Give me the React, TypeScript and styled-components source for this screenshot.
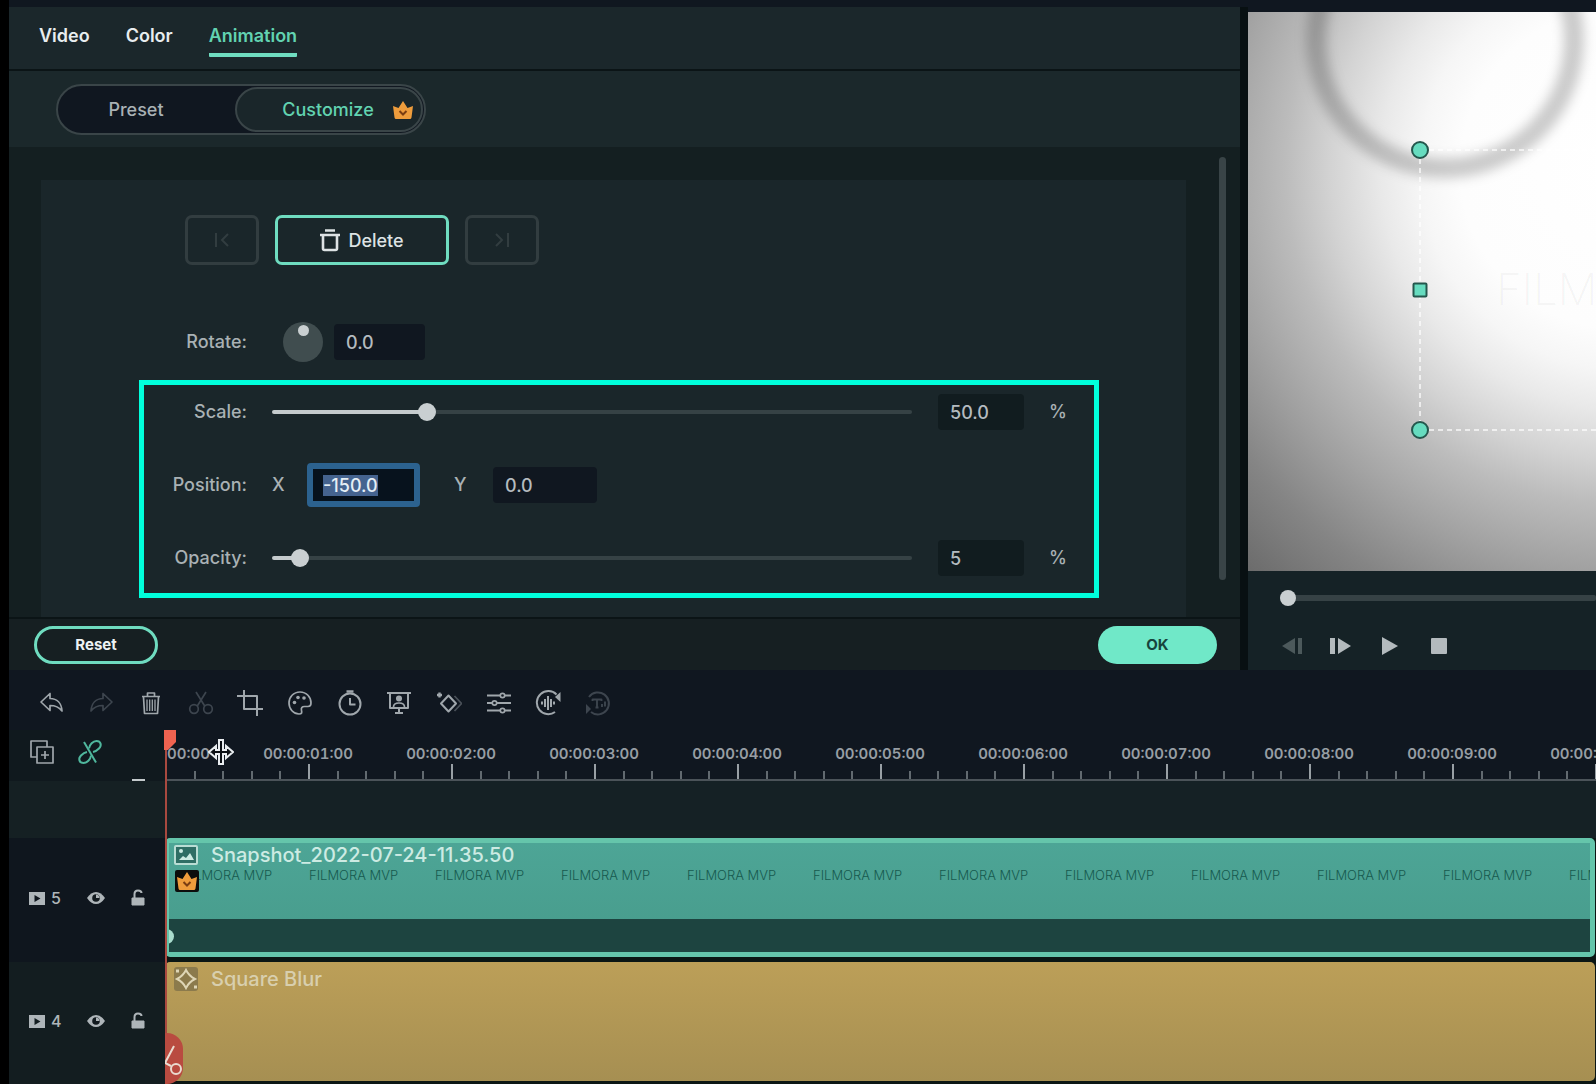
import React, { useEffect, useRef, useState } from "react";
import styled, { createGlobalStyle, css } from "styled-components";

const color = {
  ink: "#101720",
  panel: "#1a262a",
  panelDeep: "#141f21",
  line: "#0b1416",
  mint: "#6fdcc0",
  mintSoft: "#62d3b1",
  text: "#a9b1b4",
  textBright: "#e8edef",
  dim: "#3a4548",
  icon: "#a0a7ac",
  highlight: "#00ffdc",
};

const GlobalStyle = createGlobalStyle`
  *, *::before, *::after { box-sizing: border-box; }
  html, body { margin: 0; background: #000; }
  body {
    font-family: Inter, "Liberation Sans", sans-serif;
    color: ${color.text};
    overflow: hidden;
  }
  button, input { font: inherit; color: inherit; }
  button { padding: 0; border: 0; background: none; cursor: pointer; }
  svg { display: block; }
`;

const Page = styled.div`
  display: flex;
  flex-direction: column;
  min-height: 100vh;
  padding-left: 9px;
`;

const Editor = styled.main`
  display: grid;
  grid-template-columns: minmax(0, 1231fr) minmax(0, 356fr);
  background: ${color.ink};
`;

/* ---------- properties panel ---------- */

const Properties = styled.section`
  display: flex;
  flex-direction: column;
  margin-top: 7px;
  background: ${color.panel};
`;

const Tabs = styled.nav`
  display: flex;
  align-items: flex-start;
  gap: 36px;
  height: 64px;
  padding: 17px 31px 0 30px;
  border-bottom: 2px solid ${color.line};
  background: #1b272b;
`;

const Tab = styled.button<{ $active?: boolean }>`
  padding-bottom: 5px;
  border-bottom: 4px solid ${(p) => (p.$active ? color.mint : "transparent")};
  border-radius: 1px;
  font-size: 18px;
  line-height: 24px;
  font-weight: 600;
  color: ${(p) => (p.$active ? color.mintSoft : color.textBright)};
`;

const ModeBar = styled.div`
  padding: 13px 47px 12px;
  background: #1b282b;
`;

const Segmented = styled.div`
  display: grid;
  grid-template-columns: 176px 188px;
  width: max-content;
  height: 51px;
  padding: 1px;
  border: 2px solid ${color.dim};
  border-radius: 26px;
  background: ${color.ink};
`;

const Segment = styled.button<{ $active?: boolean }>`
  display: flex;
  align-items: center;
  justify-content: center;
  gap: 18px;
  border-radius: 23px;
  font-size: 18px;
  font-weight: 500;
  color: ${color.text};
  padding-right: 22px;
  ${(p) =>
    p.$active &&
    css`
      border: 2px solid ${color.dim};
      background: ${color.panel};
      color: ${color.mintSoft};
      padding: 0 6px 0 44px;
    `}
`;

const ScrollArea = styled.div`
  display: flex;
  align-items: flex-start;
  gap: 33px;
  padding: 0 14px 0 32px;
  background: ${color.panelDeep};
`;

const ScrollThumb = styled.div`
  flex: none;
  align-self: stretch;
  width: 7px;
  margin: 10px 0 37px;
  border-radius: 4px;
  background: #394447;
`;

const Card = styled.div`
  flex: 1;
  min-width: 0;
  margin-top: 33px;
  padding: 35px 87px 19px 98px;
  background: ${color.panel};
`;

const KeyframeButtons = styled.div`
  display: flex;
  gap: 16px;
  padding-left: 46px;
`;

const KeyButton = styled.button<{ $primary?: boolean }>`
  display: flex;
  align-items: center;
  justify-content: center;
  gap: 8px;
  width: ${(p) => (p.$primary ? 174 : 74)}px;
  height: 50px;
  border: 3px solid ${(p) => (p.$primary ? color.mint : "#323d40")};
  border-radius: 7px;
  font-size: 18px;
  font-weight: 500;
  color: ${(p) => (p.$primary ? "#dde2e4" : "#323d40")};
`;

const Row = styled.div`
  display: flex;
  align-items: center;
  height: 46px;
`;

const RotateRow = styled(Row)`
  margin: 54px 0 15px;
  padding-left: 5px;
`;

const Label = styled.label`
  flex: none;
  width: 103px;
  text-align: right;
  font-size: 18px;
  line-height: 24px;
  font-weight: 500;
  white-space: nowrap;
`;

const Dial = styled.div`
  display: flex;
  justify-content: center;
  width: 40px;
  height: 40px;
  margin: 0 11px 0 36px;
  padding-top: 3px;
  border-radius: 50%;
  background: #404d4f;

  &::after {
    content: "";
    width: 11px;
    height: 11px;
    border-radius: 50%;
    background: #c9cfd1;
  }
`;

const Field = styled.input<{ $width: number; $tone?: string }>`
  flex: none;
  width: ${(p) => p.$width}px;
  height: 36px;
  padding: 0 12px;
  border: 0;
  border-radius: 4px;
  outline: 0;
  background: ${(p) => p.$tone || color.ink};
  font-size: 18px;
  line-height: 24px;
  font-weight: 500;
  color: #b4bbbf;
`;

const FocusField = styled(Field)`
  height: 44px;
  padding: 0 10px;
  border: 6px solid #2c628f;
  background: #07121d;
  color: #e6eef5;

  &::selection {
    background: #45638f;
    color: #e6eef5;
  }
`;

const Highlight = styled.section`
  display: flex;
  flex-direction: column;
  gap: 27px;
  padding: 4px 27px 12px 0;
  border: 5px solid ${color.highlight};
`;

const Range = styled.input<{ $thumb: number; $track: number }>`
  appearance: none;
  flex: 1;
  min-width: 0;
  height: 20px;
  margin: 0;
  background: none;
  cursor: pointer;

  &::-webkit-slider-runnable-track {
    height: ${(p) => p.$track}px;
    border-radius: 2px;
    background: linear-gradient(
      to right,
      #c5cbcd var(--fill),
      #364245 var(--fill)
    );
  }

  &::-webkit-slider-thumb {
    appearance: none;
    width: ${(p) => p.$thumb}px;
    height: ${(p) => p.$thumb}px;
    margin-top: ${(p) => (p.$track - p.$thumb) / 2}px;
    border-radius: 50%;
    background: #c9cfd1;
  }
`;

const SliderSlot = styled.div`
  display: flex;
  flex: 1;
  min-width: 0;
  margin: 0 26px 0 25px;
`;

const Unit = styled.span`
  margin-left: 25px;
  font-size: 18px;
  line-height: 24px;
  font-weight: 500;
`;

const AxisLabel = styled.label`
  width: 35px;
  margin-left: 25px;
  font-size: 18px;
  line-height: 24px;
  font-weight: 500;

  & + input + & {
    width: 39px;
    margin-left: 34px;
  }
`;

const Footer = styled.footer`
  display: flex;
  align-items: center;
  justify-content: space-between;
  height: 53px;
  padding: 0 23px 0 25px;
  border-top: 2px solid ${color.line};
  background: #161f22;
`;

const Pill = styled.button<{ $filled?: boolean }>`
  width: ${(p) => (p.$filled ? 119 : 124)}px;
  height: 38px;
  border: ${(p) => (p.$filled ? "0" : `3px solid ${color.mint}`)};
  border-radius: 19px;
  background: ${(p) => (p.$filled ? "#70e8c8" : "transparent")};
  color: ${(p) => (p.$filled ? "#17443c" : "#eef2f3")};
  font-size: 15px;
  font-weight: 700;
`;

/* ---------- preview ---------- */

const Preview = styled.section`
  display: flex;
  flex-direction: column;
  margin-top: 7px;
  padding-top: 5px;
  border-left: 8px solid #081012;
  background: ${color.ink};
`;

const Screen = styled.div`
  position: relative;
  flex: 1;
  overflow: hidden;
  background: radial-gradient(
    circle at 107% 28%,
    #fff 0,
    #fdfdfd 160px,
    #f6f6f6 200px,
    #e9e9e9 240px,
    #d3d3d3 290px,
    #bcbcbc 335px,
    #a2a2a2 400px,
    #858585 470px,
    #6c6c6c 547px
  );
`;

const ScreenArt = styled.svg`
  position: absolute;
  top: 0;
  left: 0;
`;

const Transport = styled.div`
  display: flex;
  flex-direction: column;
  gap: 26px;
  height: 99px;
  padding: 17px 0 0 32px;
  background: #152226;
`;

const Scrub = styled.div`
  display: flex;
`;

const TransportButtons = styled.div`
  display: flex;
  gap: 25px;
  color: #b3babd;
`;

const TransportButton = styled.button`
  width: 24px;
  height: 24px;

  &:disabled {
    color: #4c595b;
  }
`;

/* ---------- timeline ---------- */

const Timeline = styled.section`
  flex: 1;
  background: ${color.ink};
`;

const Toolbar = styled.div`
  display: grid;
  grid-template-columns: repeat(12, 1fr);
  width: 596px;
  height: 60px;
  margin-left: 18px;
  padding-top: 5px;
  align-items: center;
  justify-items: center;
`;

const Tool = styled.button<{ $off?: boolean }>`
  color: ${(p) => (p.$off ? "#3d454e" : color.icon)};
`;

const Tracks = styled.div`
  position: relative;
`;

const TimelineRow = styled.div`
  display: grid;
  grid-template-columns: 156px minmax(0, 1fr);
`;

const RulerTools = styled.div`
  display: flex;
  align-items: center;
  gap: 22px;
  padding: 0 0 8px 20px;
  color: ${color.icon};
  background: #10191e;
`;

const Ruler = styled.div`
  display: flex;
  height: 51px;
  overflow: hidden;
  border-bottom: 2px solid #4b5359;
`;

const Second = styled.div`
  display: flex;
  flex: none;
  flex-direction: column;
  justify-content: flex-end;
  width: 143px;
`;

const Timecode = styled.time`
  align-self: flex-start;
  width: 0;
  display: flex;
  justify-content: center;
  font-size: 15px;
  line-height: 20px;
  font-weight: 600;
  font-variant-numeric: tabular-nums;
  color: #979ea4;
  white-space: nowrap;
`;

const Ticks = styled.div`
  display: grid;
  grid-template-columns: repeat(5, 1fr);
  align-items: end;
  height: 15px;
`;

const Tick = styled.i`
  width: 2px;
  height: 8px;
  background: #626a70;

  &:first-child {
    height: 15px;
    background: #99a0a5;
  }
`;

const EmptyHead = styled.div`
  display: flex;
  justify-content: flex-end;
  height: 57px;
  padding-right: 20px;
  background: #152023;
`;

const Dash = styled.i`
  width: 13px;
  height: 2px;
  margin-top: -2px;
  background: #c4cacc;
  z-index: 1;
`;

const EmptyLane = styled.div`
  background: #152125;
`;

const TrackHead = styled.div<{ $active?: boolean }>`
  display: flex;
  align-items: center;
  padding: 0 0 4px 20px;
  color: #aeb5b9;
  background: ${(p) => (p.$active ? "#0f161e" : "#131d20")};
`;

const TrackNumber = styled.span`
  width: 42px;
  padding-left: 6px;
  font-size: 16px;
  line-height: 20px;
  font-weight: 500;
`;

const HeadButton = styled.button`
  width: 18px;
  height: 20px;
  margin-right: 25px;

  &:last-child {
    margin: 0;
  }
`;

const Lane = styled.div<{ $last?: boolean }>`
  padding: 0 1px ${(p) => (p.$last ? 3 : 5)}px 0;
  background: #0b1614;
`;

const Clip = styled.article<{ $kind: "media" | "effect" }>`
  position: relative;
  overflow: hidden;
  max-width: 1430px;
  height: 119px;
  border-radius: 5px;
  ${(p) =>
    p.$kind === "media"
      ? css`
          border: 5px solid #65c5ab;
          border-left-width: 4px;
          background: linear-gradient(#4da596, #479b8b);
        `
      : css`
          padding: 5px 4px;
          background: linear-gradient(#bc9f58, #a68f52);
        `}
`;

const ClipTitle = styled.h2<{ $muted?: boolean }>`
  display: flex;
  align-items: center;
  gap: 13px;
  margin: 0;
  padding-left: 5px;
  font-size: 20px;
  line-height: 24px;
  font-weight: 500;
  color: ${(p) => (p.$muted ? "#d8cfae" : "#cdebe3")};
  white-space: nowrap;
`;

const Thumbnails = styled.div`
  display: flex;
  height: 52px;
  padding-left: 14px;
`;

const Thumbnail = styled.span`
  flex: none;
  width: 126px;
  font-size: 13px;
  line-height: 16px;
  font-weight: 300;
  color: #175a4f;
  white-space: nowrap;
`;

const CrownBadge = styled.div`
  position: absolute;
  top: 27px;
  left: 6px;
  padding: 0 1px;
  border-radius: 2px;
  background: #0c0d0c;
`;

const KeyframeLane = styled.div`
  height: 33px;
  background: #1d4440;
`;

const KeyframeDot = styled.i`
  position: absolute;
  bottom: 8px;
  left: -10px;
  width: 15px;
  height: 15px;
  border-radius: 50%;
  background: #a9dccd;
`;

const Playhead = styled.div`
  position: absolute;
  top: 0;
  bottom: 0;
  left: 156px;
  width: 2px;
  background: #a8493f;
`;

const PlayheadGrip = styled.svg`
  position: absolute;
  top: 0;
  left: -1px;
`;

const SplitTag = styled.div`
  position: absolute;
  bottom: 0;
  left: 0;
  width: 18px;
  height: 51px;
  overflow: hidden;
  border-radius: 0 16px 16px 0;
  background: #b94b40;
`;

const Pointer = styled.svg`
  position: absolute;
  top: 8px;
  left: 199px;
`;

/* ---------- drawings ---------- */

const Crown = ({ size }: { size: number }) => (
  <svg width={size} height={size} viewBox="0 0 22 22">
    <path
      d="M1 7 6.500 9 11 2l4.500 7L21 7l-1.500 11.500q-.3 1.500-1.500 1.500H4q-1.200 0-1.500-1.500z"
      fill="#ee9c3c"
    />
    <path d="m7.500 12 3.500 3.500 3.500-3.500" fill="none" stroke="#7a3d12" strokeWidth="2" />
  </svg>
);

type StrokeIconProps = { size?: number; children: React.ReactNode };

const StrokeIcon = ({ size = 26, children }: StrokeIconProps) => (
  <svg
    width={size}
    height={size}
    viewBox="0 0 26 26"
    fill="none"
    stroke="currentColor"
    strokeWidth="1.700"
    strokeLinejoin="round"
  >
    {children}
  </svg>
);

const tools = [
  {
    name: "Undo",
    art: <path d="M2 12 11 3.500v5c7 0 11.500 4.500 12 12.500-3-4-6.500-5.500-12-5.500v5z" />,
  },
  {
    name: "Redo",
    off: true,
    art: <path d="M24 12 15 3.500v5C8 8.500 3.500 13 3 21c3-4 6.500-5.500 12-5.500v5z" />,
  },
  {
    name: "Delete clip",
    art: (
      <>
        <path d="M4 6.500h18M9.500 6V3h7v3M5.500 7l1 16.500h13l1-16.500" />
        <path d="M9 9.500v11.500M11.700 9.500v11.500M14.300 9.500v11.500M17 9.500v11.500" strokeWidth="1.300" />
      </>
    ),
  },
  {
    name: "Split",
    off: true,
    art: (
      <>
        <path d="m8 2 9 14.500M18 2 9 16.500" />
        <circle cx="6" cy="19" r="4.300" />
        <circle cx="20" cy="19" r="4.300" />
      </>
    ),
  },
  {
    name: "Crop",
    art: <path d="M7 0v19h19M0 6h20v20" strokeWidth="2" />,
  },
  {
    name: "Color",
    art: (
      <>
        <path d="M13 2C6.500 2 2 7 2 13s4.500 11 10 11c3 0 3-1.500 2.500-3.500-.6-2.500.5-4 3-4H21c2 0 3-1.500 3-3.500C24 7 19.500 2 13 2z" />
        <g fill="currentColor" stroke="none">
          <circle cx="7.500" cy="12.500" r="1.800" />
          <circle cx="11" cy="7.500" r="1.800" />
          <circle cx="17" cy="8" r="1.800" />
        </g>
      </>
    ),
  },
  {
    name: "Speed",
    art: (
      <>
        <circle cx="13" cy="14" r="10.500" strokeWidth="2" />
        <path d="M9.500 1.500h7" strokeWidth="2.500" />
        <path d="M13 8v6.500h5.500" strokeWidth="2" />
      </>
    ),
  },
  {
    name: "Green screen",
    art: (
      <>
        <path d="M1 3h24M4 3v15h18V3M13 18v4M9 23h8" strokeWidth="2" />
        <circle cx="13" cy="8.500" r="2.200" fill="currentColor" />
        <path d="M7.500 17c0-3 2.500-4 5.500-4s5.500 1 5.500 4" />
      </>
    ),
  },
  {
    name: "Keyframe",
    art: (
      <>
        <path d="m12.500 5.500 7.500 8-7.500 8-7.500-8z" strokeWidth="2" />
        <path d="m18.500 6 7 7.500-7 7.500" opacity=".4" />
        <path d="M3.500 2.500v5M1 5h5" strokeWidth="2.400" />
      </>
    ),
  },
  {
    name: "Adjust",
    art: (
      <>
        <path d="M1 5.500h13M19 5.500h6M1 13h5M11 13h14M1 20.500h13M19 20.500h6" strokeWidth="2" />
        <circle cx="16.500" cy="5.500" r="2.200" />
        <circle cx="8.500" cy="13" r="2.200" />
        <circle cx="16.500" cy="20.500" r="2.200" />
      </>
    ),
  },
  {
    name: "Audio",
    art: (
      <>
        <path d="M21.500 4.500A11.500 11.500 0 1 0 20 22" strokeWidth="2" />
        <path d="M25.500 2v10l-5.500-5z" fill="currentColor" stroke="none" />
        <path d="M7 11.500v3M10 9v8M13 6v14M16 9v8M19 11.500v3" strokeWidth="2" />
      </>
    ),
  },
  {
    name: "Text to speech",
    off: true,
    art: (
      <>
        <path d="M4 7a11 11 0 1 1 2 15" strokeWidth="2" />
        <path d="M1 14v10l5-5z" fill="currentColor" stroke="none" />
        <path d="M7.500 11V9.500h9V11M12 9.500v8M10.500 17.500h3M17 14v3M20 11.500v5" strokeWidth="1.900" />
      </>
    ),
  },
];

const Film = () => (
  <svg width="16" height="13" viewBox="0 0 16 13">
    <path d="M0 0h16v13H0zM5.500 3v7l6-3.500z" fill="currentColor" fillRule="evenodd" />
  </svg>
);

const Eye = () => (
  <svg width="18" height="20" viewBox="0 0 18 20">
    <path d="M0 10q4-6 9-6t9 6q-4 6-9 6t-9-6z" fill="currentColor" />
    <circle cx="9" cy="10" r="3.800" fill="#121a1f" />
    <path d="M9 10V6.500a3.500 3.500 0 0 1 3.500 3.500z" fill="currentColor" />
  </svg>
);

const Unlocked = () => (
  <svg width="16" height="20" viewBox="0 0 16 20">
    <path d="M2 10h12v7H2z" fill="currentColor" stroke="currentColor" />
    <path d="M4.500 10V6Q4.500 2.500 8 2.500T11.500 5" fill="none" stroke="currentColor" strokeWidth="2" />
  </svg>
);

const Trash = () => (
  <svg width="20" height="24" viewBox="0 0 20 24" fill="none" stroke="currentColor" strokeWidth="2.600">
    <path d="M5 2.500h10M0 7h20M3 7v13.500q0 1.500 1.500 1.500h11q1.500 0 1.500-1.500V7" />
  </svg>
);

const Step = ({ flip }: { flip?: boolean }) => (
  <svg width="16" height="16" viewBox="0 0 16 16" fill="none" stroke="currentColor" strokeWidth="2">
    {flip ? <path d="m2 2 6 6-6 6M14 1v14" /> : <path d="m14 2-6 6 6 6M2 1v14" />}
  </svg>
);

/* ---------- pieces ---------- */

type SliderProps = { label: string; max: number; initial: number; digits: number };

const SliderRow = ({ label, max, initial, digits }: SliderProps) => {
  const [value, setValue] = useState(initial);
  const id = label.toLowerCase();
  return (
    <Row>
      <Label htmlFor={id}>{label}:</Label>
      <SliderSlot>
        <Range
          id={id}
          type="range"
          min={0}
          max={max}
          value={value}
          $thumb={18}
          $track={4}
          style={{ "--fill": `${(value / max) * 100}%` } as React.CSSProperties}
          onChange={(e) => setValue(Number(e.target.value))}
        />
      </SliderSlot>
      <Field
        aria-label={`${label} value`}
        $width={86}
        $tone="#111c1f"
        value={value.toFixed(digits)}
        onChange={(e) => setValue(Number(e.target.value) || 0)}
      />
      <Unit>%</Unit>
    </Row>
  );
};

const PropertiesPanel = () => {
  const [tab, setTab] = useState("Animation");
  const xField = useRef<HTMLInputElement>(null);

  useEffect(() => {
    xField.current?.focus({ preventScroll: true });
    xField.current?.select();
  }, []);

  return (
    <Properties>
      <Tabs>
        {["Video", "Color", "Animation"].map((name) => (
          <Tab key={name} $active={name === tab} onClick={() => setTab(name)}>
            {name}
          </Tab>
        ))}
      </Tabs>
      <ModeBar>
        <Segmented>
          <Segment>Preset</Segment>
          <Segment $active>
            Customize
            <Crown size={22} />
          </Segment>
        </Segmented>
      </ModeBar>
      <ScrollArea>
        <Card>
          <KeyframeButtons>
            <KeyButton aria-label="Previous keyframe">
              <Step />
            </KeyButton>
            <KeyButton $primary>
              <Trash />
              Delete
            </KeyButton>
            <KeyButton aria-label="Next keyframe">
              <Step flip />
            </KeyButton>
          </KeyframeButtons>
          <RotateRow>
            <Label htmlFor="rotate">Rotate:</Label>
            <Dial />
            <Field id="rotate" $width={91} defaultValue="0.0" />
          </RotateRow>
          <Highlight>
            <SliderRow label="Scale" max={213} initial={50} digits={1} />
            <Row>
              <Label as="span">Position:</Label>
              <AxisLabel htmlFor="pos-x">X</AxisLabel>
              <FocusField ref={xField} id="pos-x" $width={113} defaultValue="-150.0" />
              <AxisLabel htmlFor="pos-y">Y</AxisLabel>
              <Field id="pos-y" $width={104} defaultValue="0.0" />
            </Row>
            <SliderRow label="Opacity" max={161} initial={5} digits={0} />
          </Highlight>
        </Card>
        <ScrollThumb />
      </ScrollArea>
      <Footer>
        <Pill>Reset</Pill>
        <Pill $filled>OK</Pill>
      </Footer>
    </Properties>
  );
};

const PreviewPanel = () => (
  <Preview>
    <Screen>
      <ScreenArt width="700" height="560" viewBox="0 0 700 560">
        <defs>
          <filter id="soft" x="-20%" y="-20%" width="140%" height="140%">
            <feGaussianBlur stdDeviation="6" />
          </filter>
        </defs>
        <circle
          cx="197"
          cy="27"
          r="129"
          fill="none"
          stroke="#000"
          strokeOpacity=".2"
          strokeWidth="20"
          filter="url(#soft)"
        />
        <text x="248" y="293" fontSize="44" fontWeight="200" fill="#000" fillOpacity=".05">
          FILMORA
        </text>
        <path
          d="M172 147v270M181 418h520M181 138h520"
          fill="none"
          stroke="#fff"
          strokeOpacity=".65"
          strokeWidth="2"
          strokeDasharray="5 4"
        />
        <g fill="#66dcbf" stroke="#24574d" strokeWidth="2">
          <circle cx="172" cy="138" r="8" />
          <rect x="165.500" y="271.500" width="13" height="13" rx="1" />
          <circle cx="172" cy="418" r="8" />
        </g>
      </ScreenArt>
    </Screen>
    <Transport>
      <Scrub>
        <Range
          aria-label="Playback position"
          type="range"
          min={0}
          max={100}
          defaultValue={0}
          $thumb={16}
          $track={6}
          style={{ "--fill": "0%" } as React.CSSProperties}
        />
      </Scrub>
      <TransportButtons>
        <TransportButton aria-label="Previous frame" disabled>
          <svg width="24" height="24" viewBox="0 0 24 24" fill="currentColor">
            <path d="M2 12 15 4v16zM18 4h4v16h-4z" />
          </svg>
        </TransportButton>
        <TransportButton aria-label="Next frame">
          <svg width="24" height="24" viewBox="0 0 24 24" fill="currentColor">
            <path d="M22 12 9 4v16zM1 4h5v16H1z" />
          </svg>
        </TransportButton>
        <TransportButton aria-label="Play">
          <svg width="24" height="24" viewBox="0 0 24 24" fill="currentColor">
            <path d="M20 12 4 3v18z" />
          </svg>
        </TransportButton>
        <TransportButton aria-label="Stop">
          <svg width="24" height="24" viewBox="0 0 24 24" fill="currentColor">
            <rect x="4" y="4" width="16" height="16" rx="1" />
          </svg>
        </TransportButton>
      </TransportButtons>
    </Transport>
  </Preview>
);

const TrackControls = ({ number, active }: { number: number; active?: boolean }) => (
  <TrackHead $active={active}>
    <Film />
    <TrackNumber>{number}</TrackNumber>
    <HeadButton aria-label={`Show track ${number}`}>
      <Eye />
    </HeadButton>
    <HeadButton aria-label={`Lock track ${number}`}>
      <Unlocked />
    </HeadButton>
  </TrackHead>
);

const seconds = Array.from({ length: 11 }, (_, i) => `00:00:${String(i).padStart(2, "0")}:00`);

const TimelinePanel = () => (
  <Timeline>
    <Toolbar>
      {tools.map((tool) => (
        <Tool key={tool.name} aria-label={tool.name} $off={tool.off}>
          <StrokeIcon>{tool.art}</StrokeIcon>
        </Tool>
      ))}
    </Toolbar>
    <Tracks>
      <TimelineRow>
        <RulerTools>
          <Tool aria-label="Add track">
            <StrokeIcon>
              <path d="M8 18H2V2h16v6M8 8h16v16H8z" />
              <path d="M16 12v8M12 16h8" />
            </StrokeIcon>
          </Tool>
          <Tool aria-label="Unlink clips">
            <StrokeIcon>
              <g stroke="#4fb79d" strokeWidth="2">
                <path d="M12 9.500C12.500 5.500 16 2 19.500 2c4.500 0 5.500 4.500 2.500 7.500-1.500 1.500-3.500 3-6 3.500" />
                <path d="M14 16.500c-.5 4-4 7.500-7.500 7.500C2 24 1 19.500 4 16.500c1.500-1.500 3.500-3 6-3.500" />
                <path d="m7 3 12 20.500" />
              </g>
            </StrokeIcon>
          </Tool>
        </RulerTools>
        <Ruler>
          {seconds.map((code) => (
            <Second key={code}>
              <Timecode>{code}</Timecode>
              <Ticks>
                <Tick />
                <Tick />
                <Tick />
                <Tick />
                <Tick />
              </Ticks>
            </Second>
          ))}
        </Ruler>
      </TimelineRow>
      <TimelineRow>
        <EmptyHead>
          <Dash />
        </EmptyHead>
        <EmptyLane />
      </TimelineRow>
      <TimelineRow>
        <TrackControls number={5} active />
        <Lane>
          <Clip $kind="media">
            <ClipTitle>
              <svg width="24" height="20" viewBox="0 0 24 20">
                <rect x="1" y="1" width="22" height="18" rx="1" fill="#2f6e65" stroke="#b9ddd4" strokeWidth="2" />
                <path d="m5 15 4-4 3 2 4-5 4 7z" fill="#cdebe3" />
                <circle cx="7" cy="6" r="2" fill="#cdebe3" />
              </svg>
              Snapshot_2022-07-24-11.35.50
            </ClipTitle>
            <Thumbnails>
              {seconds.concat("end").map((key) => (
                <Thumbnail key={key}>FILMORA MVP</Thumbnail>
              ))}
            </Thumbnails>
            <CrownBadge>
              <Crown size={22} />
            </CrownBadge>
            <KeyframeLane />
            <KeyframeDot />
          </Clip>
        </Lane>
      </TimelineRow>
      <TimelineRow>
        <TrackControls number={4} />
        <Lane $last>
          <Clip $kind="effect">
            <ClipTitle $muted>
              <svg width="24" height="24" viewBox="0 0 24 24">
                <rect width="24" height="24" rx="3" fill="#8b7a4c" />
                <path
                  d="M12 3q3 6 9 9-6 3-9 9-3-6-9-9 6-3 9-9z"
                  fill="none"
                  stroke="#ded5b5"
                  strokeWidth="2"
                />
                <path d="M2 4h3M20 20h3" stroke="#ded5b5" strokeWidth="3" />
              </svg>
              Square Blur
            </ClipTitle>
          </Clip>
        </Lane>
      </TimelineRow>
      <Playhead>
        <PlayheadGrip width="12" height="20" viewBox="0 0 12 20">
          <path d="M0 0h12v12l-8 8H0z" fill="#ef6350" />
        </PlayheadGrip>
        <SplitTag>
          <svg width="18" height="51" viewBox="0 0 18 51" fill="none" stroke="#eadbd0" strokeWidth="2">
            <path d="m9 13-9 17 6 3" />
            <circle cx="11" cy="36" r="5" />
          </svg>
        </SplitTag>
      </Playhead>
      <Pointer width="26" height="28" viewBox="0 0 26 28">
        <path
          d="M11 2h4v10h3V8l7 6-7 6v-4h-3v10h-4V16H8v4l-7-6 7-6v4h3z"
          fill="#0b0f14"
          stroke="#e9edf0"
          strokeWidth="2"
        />
      </Pointer>
    </Tracks>
  </Timeline>
);

export default function App() {
  return (
    <Page>
      <GlobalStyle />
      <Editor>
        <PropertiesPanel />
        <PreviewPanel />
      </Editor>
      <TimelinePanel />
    </Page>
  );
}
